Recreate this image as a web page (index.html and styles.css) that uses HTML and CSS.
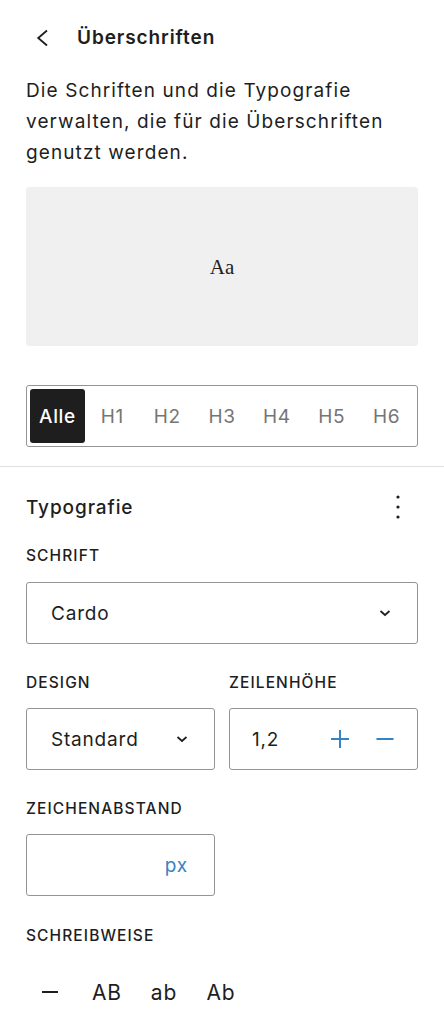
FILE: index.html
```html
<!DOCTYPE html>
<html lang="de">
<head>
<meta charset="utf-8">
<link rel="stylesheet" href="styles.css">
</head>
<body>
<div class="top">
  <div class="header">
    <span class="back"><svg width="24" height="24" viewBox="0 0 24 24"><path d="M17 4.5 8.2 12l8.8 7.5" fill="none" stroke="#1e1e1e" stroke-width="1.8"/></svg></span>
    <h1 class="title">Überschriften</h1>
  </div>
  <p class="desc">Die Schriften und die Typografie verwalten, die für die Überschriften genutzt werden.</p>
  <div class="preview"><span class="aa">Aa</span></div>
  <div class="tabs">
    <span class="tab active">Alle</span>
    <span class="tab">H1</span>
    <span class="tab">H2</span>
    <span class="tab">H3</span>
    <span class="tab">H4</span>
    <span class="tab">H5</span>
    <span class="tab">H6</span>
  </div>
</div>
<div class="divider"></div>
<div class="panel">
  <div class="panel-head">
    <h2 class="panel-title">Typografie</h2>
    <span class="kebab"><svg width="24" height="28" viewBox="0 0 24 28"><circle cx="12" cy="4" r="1.6" fill="#1e1e1e"/><circle cx="12" cy="14" r="1.6" fill="#1e1e1e"/><circle cx="12" cy="24" r="1.6" fill="#1e1e1e"/></svg></span>
  </div>
  <div class="label lbl-schrift">Schrift</div>
  <div class="field select">
    <span class="val">Cardo</span>
    <svg class="chev" width="14" height="10" viewBox="0 0 14 10"><path d="M2.5 3 7 7l4.5-4" fill="none" stroke="#1e1e1e" stroke-width="1.7"/></svg>
  </div>
  <div class="cols">
    <div class="col">
      <div class="label">Design</div>
      <div class="field select">
        <span class="val">Standard</span>
        <svg class="chev" width="14" height="10" viewBox="0 0 14 10"><path d="M2.5 3 7 7l4.5-4" fill="none" stroke="#1e1e1e" stroke-width="1.7"/></svg>
      </div>
    </div>
    <div class="col">
      <div class="label">Zeilenhöhe</div>
      <div class="field number">
        <span class="val">1,2</span>
        <span class="steppers">
          <svg width="20" height="20" viewBox="0 0 20 20"><path d="M10 1v18M1 10h18" stroke="#3582c4" stroke-width="2"/></svg>
          <svg width="20" height="20" viewBox="0 0 20 20"><path d="M1.5 10h17" stroke="#3582c4" stroke-width="2"/></svg>
        </span>
      </div>
    </div>
  </div>
  <div class="label lbl-zeichen">Zeichenabstand</div>
  <div class="field unit">
    <span class="px">px</span>
  </div>
  <div class="label lbl-schreib">Schreibweise</div>
  <div class="cases">
    <span class="case"><svg width="18" height="4" viewBox="0 0 18 4"><path d="M1 2h16" stroke="#1e1e1e" stroke-width="2"/></svg></span>
    <span class="case">AB</span>
    <span class="case">ab</span>
    <span class="case">Ab</span>
  </div>
</div>
</body>
</html>
```
FILE: styles.css
```css
* { box-sizing: border-box; }
html, body { margin: 0; padding: 0; background: #fff; }
body {
  font-family: Inter, "Noto Sans", "Liberation Sans", sans-serif;
  color: #1e1e1e;
  width: 444px;
}
.top { padding: 0 26px; }
.header {
  height: 75px;
  display: flex;
  align-items: center;
}
.back {
  width: 24px;
  height: 24px;
  margin-left: 4px;
  display: flex;
}
.title {
  margin: 0 0 0 23px;
  font-size: 19px;
  font-weight: 600;
  letter-spacing: 0.9px;
}
.desc {
  margin: 0;
  font-size: 19px;
  line-height: 31px;
  letter-spacing: 1.1px;
}
.preview {
  margin-top: 19px;
  height: 159px;
  background: #f0f0f0;
  border-radius: 3px;
  display: flex;
  align-items: center;
  justify-content: center;
}
.aa {
  font-family: "Liberation Serif", "DejaVu Serif", serif;
  font-size: 21px;
  padding-top: 1px;
}
.tabs {
  margin-top: 39px;
  height: 62px;
  border: 1px solid #949494;
  border-radius: 3px;
  padding: 3px;
  display: grid;
  grid-template-columns: repeat(7, 1fr);
}
.tab {
  display: flex;
  align-items: center;
  justify-content: center;
  font-size: 19px;
  letter-spacing: 0.6px;
  color: #757575;
  border-radius: 3px;
}
.tab.active {
  background: #1e1e1e;
  color: #fff;
  font-weight: 500;
}
.divider {
  margin-top: 19px;
  height: 1px;
  background: #e0e0e0;
}
.panel { padding: 26px 26px 0; }
.panel-head {
  height: 28px;
  display: flex;
  align-items: center;
  justify-content: space-between;
}
.panel-title {
  margin: 0;
  font-size: 19px;
  font-weight: 500;
  letter-spacing: 0.9px;
}
.kebab { display: flex; margin-right: 8px; }
.label {
  font-size: 15.5px;
  font-weight: 500;
  text-transform: uppercase;
  letter-spacing: 1.1px;
  line-height: 16px;
  height: 16px;
}
.lbl-schrift { margin-top: 27px; }
.field {
  margin-top: 18px;
  height: 62px;
  border: 1px solid #949494;
  border-radius: 3px;
  display: flex;
  align-items: center;
  font-size: 19px;
  letter-spacing: 0.8px;
}
.select { padding: 0 25px 0 24px; justify-content: space-between; }
.chev { display: block; }
.cols {
  margin-top: 31px;
  display: grid;
  grid-template-columns: 1fr 1fr;
  column-gap: 14px;
}
.cols .field { margin-top: 17px; }
.number { padding: 0 22px 0 22px; justify-content: space-between; }
.steppers { display: flex; gap: 25px; }
.steppers svg { display: block; }
.lbl-zeichen { margin-top: 31px; }
.unit {
  margin-top: 17px;
  width: 189px;
  justify-content: flex-end;
  padding-right: 26px;
}
.px { color: #3582c4; }
.lbl-schreib { margin-top: 32px; }
.cases {
  margin-top: 25px;
  display: flex;
  gap: 9px;
}
.case {
  width: 48px;
  height: 46px;
  display: flex;
  align-items: center;
  justify-content: center;
  font-size: 21px;
  letter-spacing: 0.8px;
}
```
